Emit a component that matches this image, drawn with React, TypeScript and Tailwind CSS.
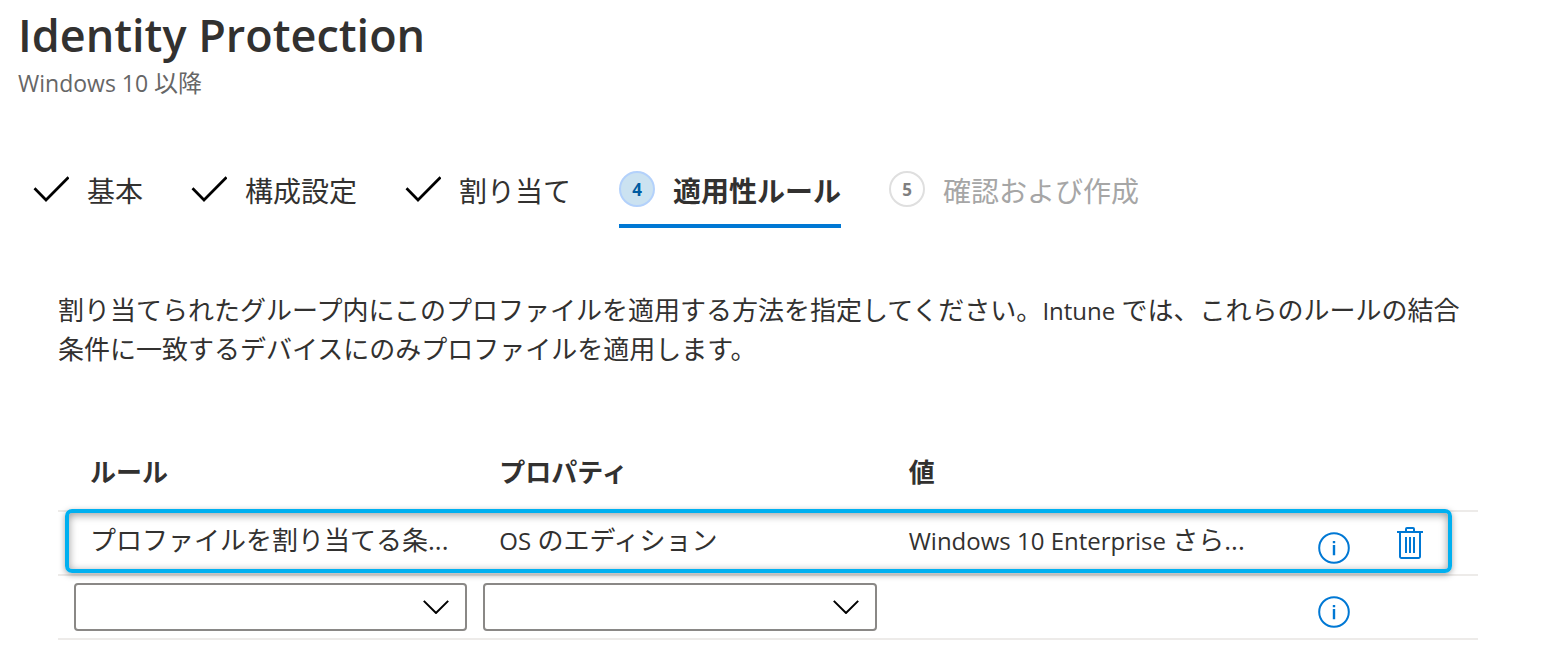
import type { ReactNode } from "react";

type StepState = "done" | "current" | "upcoming";

const steps: { label: string; state: StepState }[] = [
  { label: "基本", state: "done" },
  { label: "構成設定", state: "done" },
  { label: "割り当て", state: "done" },
  { label: "適用性ルール", state: "current" },
  { label: "確認および作成", state: "upcoming" },
];

function CheckIcon() {
  return (
    <svg viewBox="0 0 36 36" className="size-9 shrink-0" fill="none" stroke="#000" strokeWidth="2.7" aria-hidden="true">
      <path d="M1.500 17.300 13 29 35.500 6.300" />
    </svg>
  );
}

function ChevronIcon() {
  return (
    <svg viewBox="0 0 26 14" className="pointer-events-none absolute top-[17px] right-[18px] h-[14px] w-[26px]" fill="none" stroke="#000" strokeWidth="2" aria-hidden="true">
      <path d="M.8.9 13 13 25.2.9" />
    </svg>
  );
}

function InfoButton() {
  return (
    <button type="button" aria-label="情報" className="mt-[10px] block size-8">
      <svg viewBox="0 0 32 32" className="size-8" aria-hidden="true">
        <circle cx="16" cy="16" r="14.8" fill="none" stroke="#0078d4" strokeWidth="2" />
        <path d="M14.800 9h2.400v2.300h-2.400zM14.800 13h2.400v10.200h-2.400z" fill="#0078d4" />
      </svg>
    </button>
  );
}

function TrashIcon() {
  return (
    <svg viewBox="0 0 26 32" className="h-8 w-[26px]" fill="none" stroke="#0078d4" strokeWidth="2" aria-hidden="true">
      <path d="M0 5h26M9 5V2a1 1 0 0 1 1-1h6a1 1 0 0 1 1 1v3M3 5v24.500A1.500 1.500 0 0 0 4.500 31h17a1.500 1.500 0 0 0 1.500-1.500V5M9 10v16M13 10v16M17 10v16" />
    </svg>
  );
}

function Step({ label, state, number }: { label: string; state: StepState; number: number }) {
  const current = state === "current";
  return (
    <li>
      <button
        type="button"
        aria-current={current ? "step" : undefined}
        className={
          "flex items-start gap-[18px] border-b-4 pb-[13px] text-[28px] " +
          (current
            ? "border-[#0078d4] font-bold text-[#323130]"
            : state === "upcoming"
              ? "border-transparent text-[#a6a6a6]"
              : "border-transparent text-[#323130]")
        }
      >
        {state === "done" ? (
          <CheckIcon />
        ) : (
          <span
            className={
              "flex size-9 shrink-0 items-center justify-center rounded-full border-2 text-[17px] font-bold " +
              (current ? "border-[#b3d1fb] bg-[#cbe2f1] text-[#005ba1]" : "border-[#dfdfdf] text-[#7f7f7f]")
            }
          >
            {number}
          </span>
        )}
        <span className="leading-10">{label}</span>
      </button>
    </li>
  );
}

function RuleSelect({ label }: { label: string }) {
  return (
    <div className="relative ml-4">
      <select
        aria-label={label}
        className="block h-12 w-full appearance-none rounded-[4px] border-2 border-[#8a8886] bg-white px-3"
      >
        <option value=""></option>
      </select>
      <ChevronIcon />
    </div>
  );
}

function Latin({ children }: { children: ReactNode }) {
  return <span className="text-[24px]">{children}</span>;
}

export default function App() {
  return (
    <main className="bg-white pb-8 font-['Open_Sans','Noto_Sans_CJK_JP',sans-serif] text-[26px] leading-[39px] text-[#323130]">
      <header className="px-[18px] pt-2">
        <h1 className="text-[45px] leading-[54px] font-semibold">Identity Protection</h1>
        <p className="pt-[3px] text-[24px] leading-9 text-[#666]">
          <span className="text-[23px]">Windows 10 </span>以降
        </p>
      </header>

      <nav aria-label="手順" className="px-[33px] pt-[70px]">
        <ol className="flex gap-12">
          {steps.map((step, i) => (
            <Step key={step.label} label={step.label} state={step.state} number={i + 1} />
          ))}
        </ol>
      </nav>

      <section className="pt-[63px] pr-[70px] pl-[58px]">
        <p>
          割り当てられたグループ内にこのプロファイルを適用する方法を指定してください。<Latin>Intune </Latin>
          では、これらのルールの結合条件に一致するデバイスにのみプロファイルを適用します。
        </p>

        <table className="mt-[62px] w-full table-fixed border-collapse">
          <colgroup>
            <col />
            <col />
            <col />
            <col className="w-24" />
            <col className="w-24" />
          </colgroup>
          <thead>
            <tr className="h-20 border-b-2 border-[#edebe9] text-left">
              <th scope="col" className="pt-1 pl-8 font-bold">ルール</th>
              <th scope="col" className="pt-1 pl-8 font-bold">プロパティ</th>
              <th scope="col" className="pt-1 pl-8 font-bold">値</th>
              <td />
              <td />
            </tr>
          </thead>
          <tbody>
            <tr className="relative h-16 border-b-2 border-[#edebe9]">
              <td className="truncate pb-1.5 pl-8">
                プロファイルを割り当てる条...
                <span className="pointer-events-none absolute -top-[2px] right-[26px] bottom-0 left-[7px] rounded-[7px] border-4 border-[#00b0f0] shadow-[0_2px_6px_rgba(0,0,0,0.35),inset_0_2px_8px_rgba(0,0,0,0.4)]" />
              </td>
              <td className="truncate pb-1.5 pl-8">
                <Latin>OS </Latin>のエディション
              </td>
              <td className="truncate pb-1.5 pl-8">
                <Latin>Windows 10 Enterprise </Latin>さら...
              </td>
              <td className="pl-8">
                <InfoButton />
              </td>
              <td className="pl-[15px]">
                <button type="button" aria-label="削除" className="block">
                  <TrashIcon />
                </button>
              </td>
            </tr>
            <tr className="h-16 border-b-2 border-[#edebe9]">
              <td>
                <RuleSelect label="ルール" />
              </td>
              <td>
                <RuleSelect label="プロパティ" />
              </td>
              <td />
              <td className="pl-8">
                <InfoButton />
              </td>
              <td />
            </tr>
          </tbody>
        </table>
      </section>
    </main>
  );
}
